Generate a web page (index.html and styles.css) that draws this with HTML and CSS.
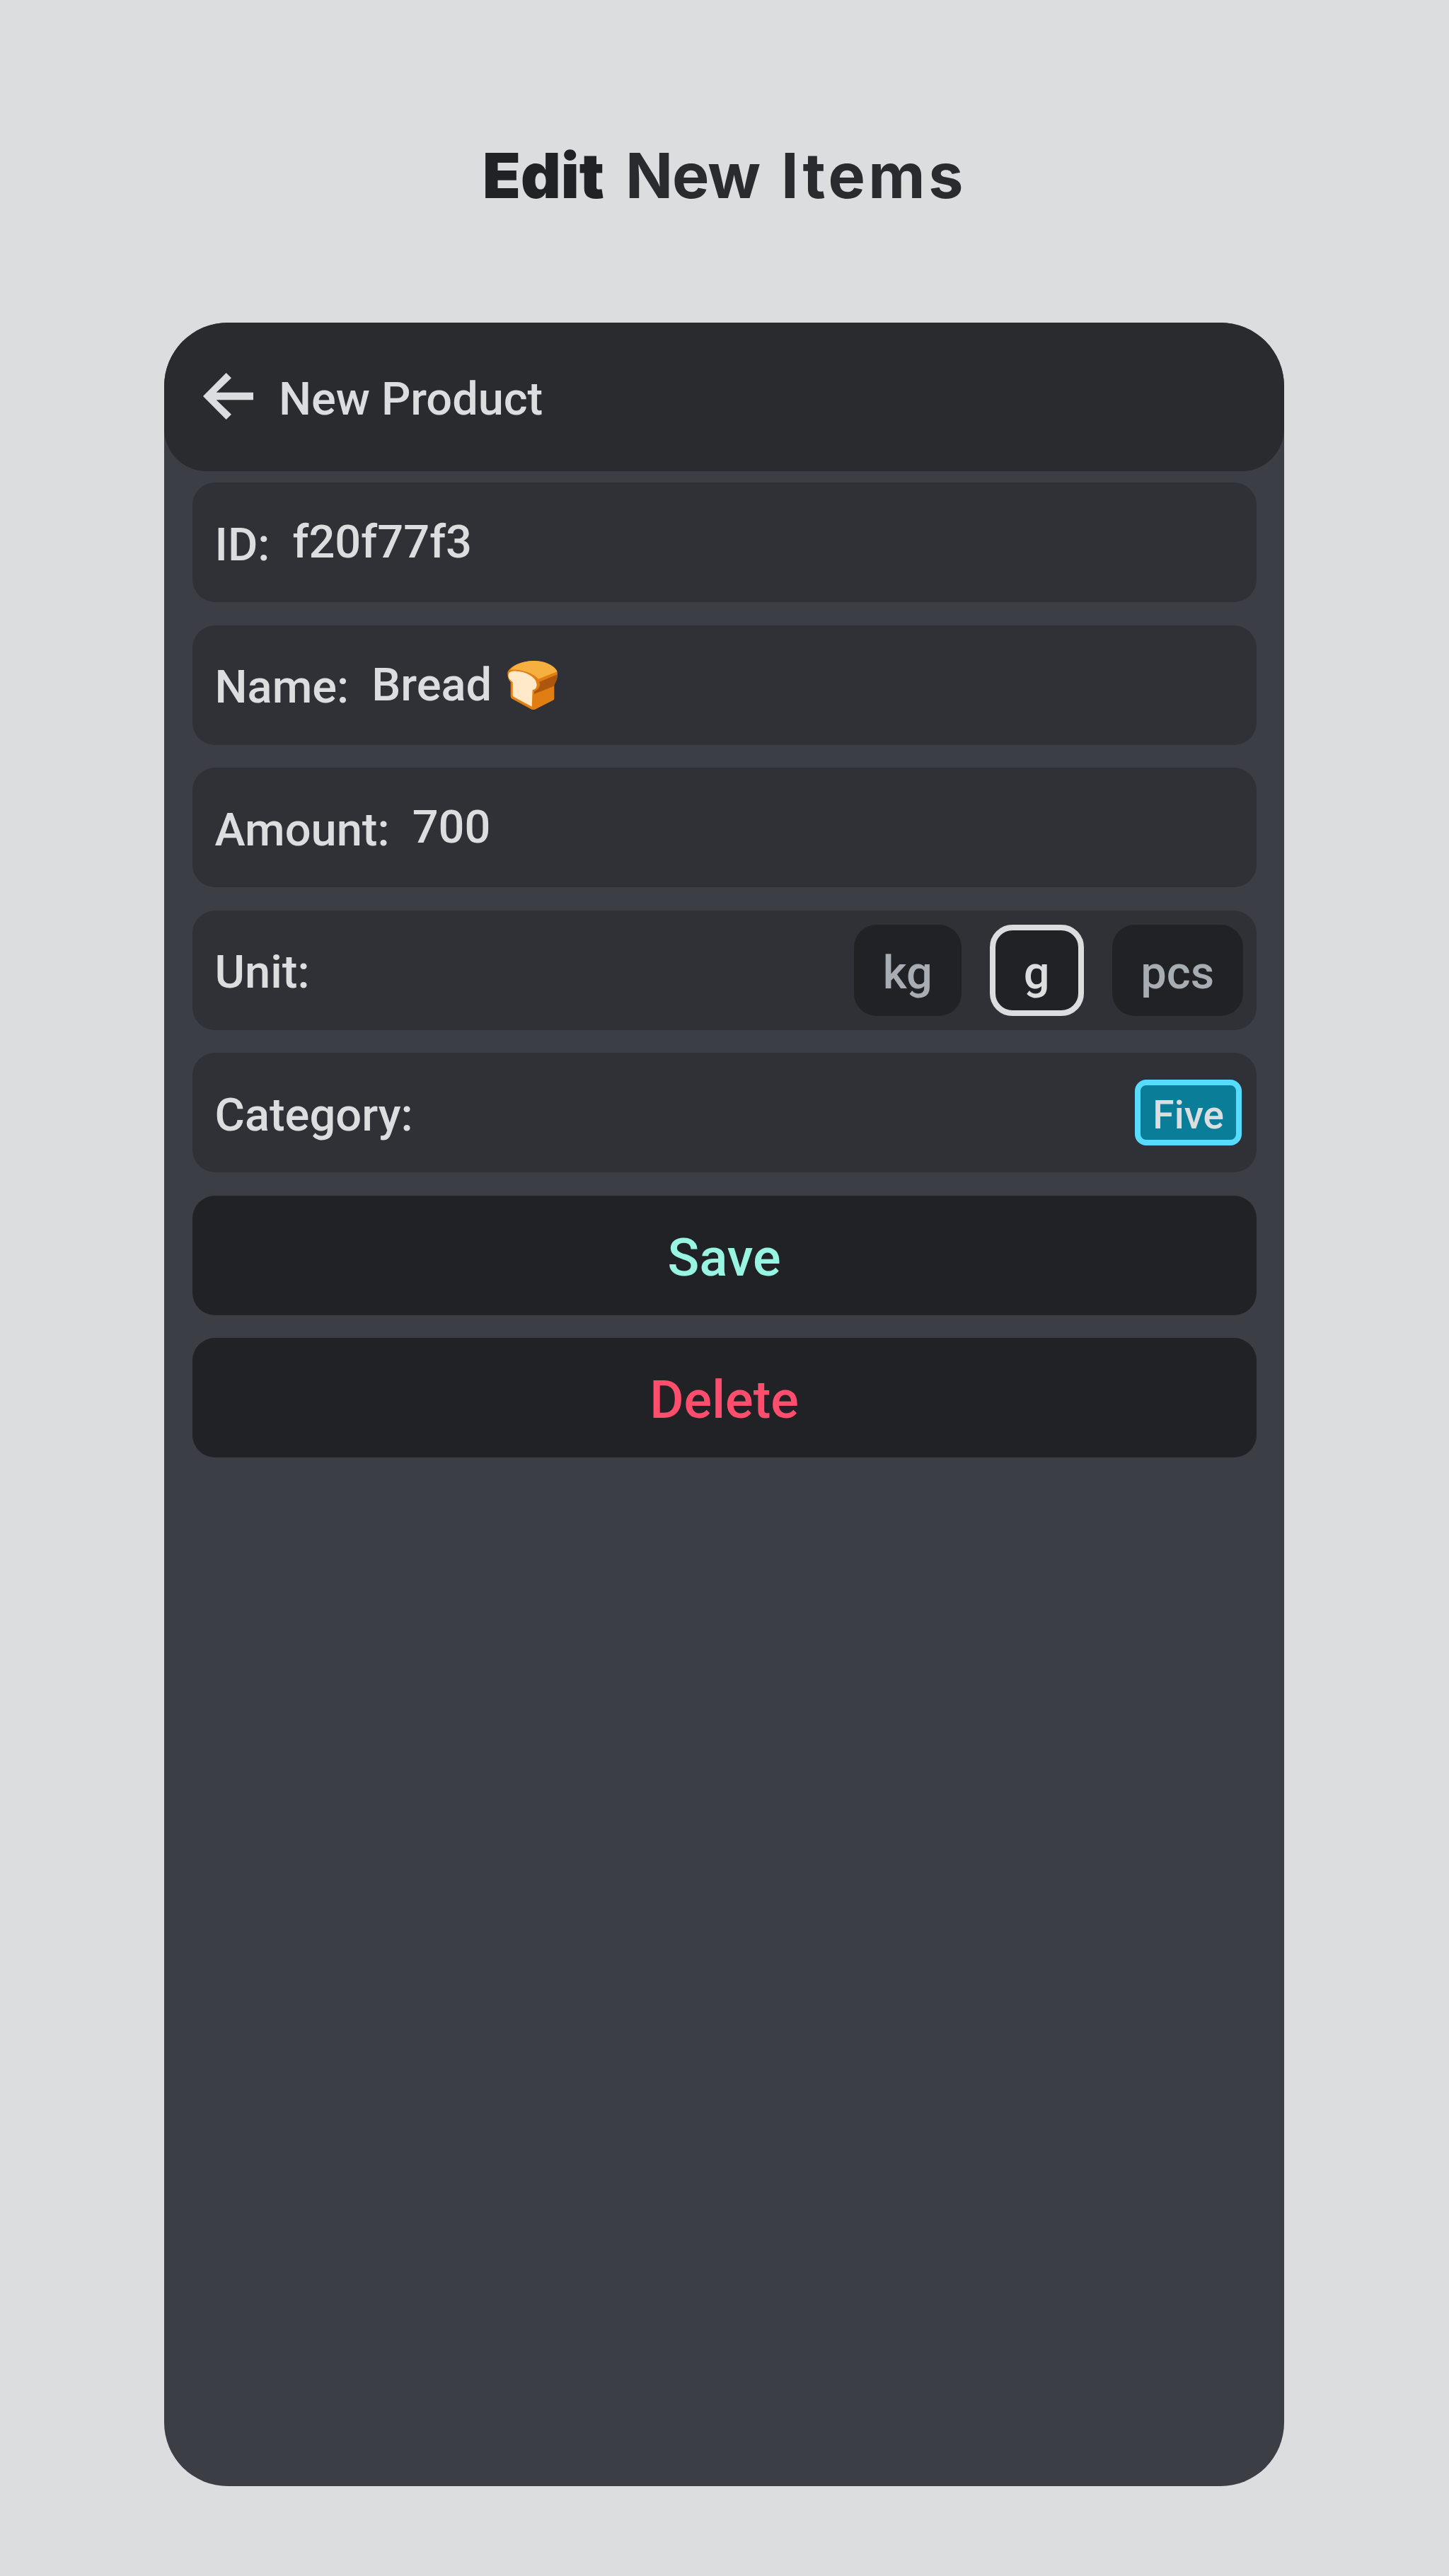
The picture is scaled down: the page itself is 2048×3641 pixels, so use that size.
FILE: index.html
```html
<!DOCTYPE html>
<html lang="en">
<head>
  <meta charset="utf-8">
  <title>Edit New Items</title>
  <link rel="stylesheet" href="styles.css">
</head>
<body>
  <h1 class="title"><span class="title-strong">Edit</span><span class="title-new">New</span><span class="title-items">Items</span></h1>
  <main class="panel">
    <header class="bar">
      <svg class="back" viewBox="0 0 71 66" role="img" aria-label="Back">
        <path d="M0 33 32.7 0 40 7.3 18.7 27.7H71V38.3H18.7L40 58.7 32.7 66Z"/>
      </svg>
      <h2 class="bar-title">New Product</h2>
    </header>
    <form class="form">
      <div class="row"><span class="label">ID:</span><span class="value">f20f77f3</span></div>
      <div class="row"><span class="label">Name:</span><span class="value">Bread</span>
        <svg class="bread" viewBox="0 0 213 208" aria-hidden="true">
          <path fill="#e07e14" d="M1 52C2 29 55 0 112 0c58 0 101 31 101 54 0 22-7 35-14 43v61c0 5-2 8-6 10l-75 38c-5 3-10 3-15 0l-81-44c-5-3-8-7-8-13V91C6 82 0 70 1 52Z"/>
          <path fill="#f6b03f" d="M12 38C30 15 70 0 112 0c55 0 92 25 100 46l-80 31C111 53 58 34 12 38Z"/>
          <path fill="#ac560f" d="M212 58c0 22-6 35-16 50l-82 33v-11c14-6 23-16 24-28 1-6-3-12-3-12Z"/>
          <path fill="#ffe9c9" d="M5 58c2-12 14-16 36-14 46 3 84 30 84 57 0 13-7 21-18 22l-3 71-75-40c-5-3-6-5-6-10V91C10 81 3 72 5 58Z"/>
        </svg>
      </div>
      <div class="row"><span class="label">Amount:</span><span class="value">700</span></div>
      <div class="row"><span class="label">Unit:</span>
        <div class="chips"><span class="chip">kg</span><span class="chip chip-active">g</span><span class="chip chip-wide">pcs</span></div>
      </div>
      <div class="row"><span class="label">Category:</span><span class="tag">Five</span></div>
      <button class="action save" type="button">Save</button>
      <button class="action delete" type="button">Delete</button>
    </form>
  </main>
</body>
</html>
```
FILE: styles.css
```css
* { box-sizing: border-box; }

body {
  margin: 0;
  height: 3641px;
  overflow: hidden;
  background: #dcdddf;
  color: #dcdddf;
  font-family: Roboto, "Liberation Sans", sans-serif;
  font-size: 65px;
  font-weight: 500;
  line-height: 1;
}

.title {
  display: flex;
  justify-content: center;
  align-items: baseline;
  gap: 30px;
  height: 456px;
  margin: 0;
  padding-top: 204px;
  color: #2a2b2f;
  font-family: Inter, "Liberation Sans", sans-serif;
  font-size: 88px;
  font-weight: 700;
}
.title-strong { color: #212226; font-weight: 900; }
.title-new { letter-spacing: -1px; }
.title-items { letter-spacing: 4.5px; }

.panel {
  width: 1583px;
  height: 3058px;
  margin-left: 232px;
  overflow: hidden;
  border-radius: 90px;
  background: #3c3e46;
}

.bar {
  display: flex;
  align-items: center;
  height: 209.5px;
  padding-left: 55px;
  border-radius: 0 0 60px 60px;
  background: #2a2b2f;
}
.back { width: 71px; height: 66px; margin-top: -1px; fill: #dcdddf; }
.bar-title { margin: 0 0 0 36px; padding-top: 8px; font-size: 65px; font-weight: 500; letter-spacing: -0.1px; }

.form {
  display: grid;
  grid-auto-rows: 169.4px;
  gap: 32.1px;
  padding: 16.6px 39.3px 0 39.5px;
}

.row {
  display: flex;
  align-items: center;
  padding: 0 19px 0 32px;
  border-radius: 32px;
  background: #303136;
}
.label { padding-top: 7px; }
.value { margin-left: 32px; }
.bread { width: 71px; height: 69.3px; margin: 1px 0 0 22px; }

.chips { display: flex; gap: 40px; margin: 1px 0 0 auto; }
.chip {
  width: 152px;
  height: 129px;
  padding-top: 36px;
  border-radius: 32px;
  background: #212226;
  color: #a8adb4;
  text-align: center;
}
.chip-active {
  width: 133px;
  padding-top: 28px;
  border: 8px solid #dcdddf;
  color: #dcdddf;
}
.chip-wide { width: 185px; }

.tag {
  width: 151px;
  height: 93px;
  margin: -1px 1.5px 0 auto;
  padding-top: 15px;
  border: 8px solid #55dcff;
  border-radius: 16px;
  background: #0a7e99;
  font-size: 55px;
  text-align: center;
}

.action {
  padding: 7px 0 0;
  border: 0;
  border-radius: 32px;
  background: #212226;
  font: inherit;
  font-size: 74px;
}
.save { color: #97f5e1; }
.delete { color: #ff4d6d; }
```
